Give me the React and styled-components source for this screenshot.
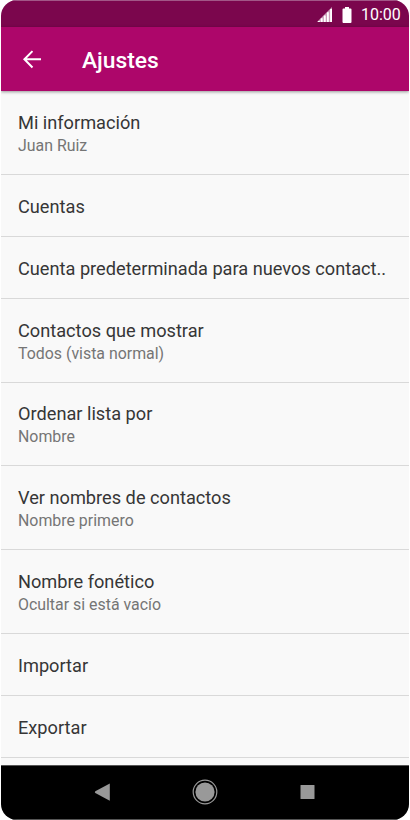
import React from "react";
import styled, { createGlobalStyle } from "styled-components";

const GlobalStyle = createGlobalStyle`
  * { box-sizing: border-box; }
  body {
    margin: 0;
    background: #ffffff;
    font-family: Roboto, "Liberation Sans", sans-serif;
  }
`;

const Phone = styled.main`
  display: flex;
  flex-direction: column;
  width: 408px;
  height: 820px;
  margin-left: 1px;
  overflow: hidden;
  border-radius: 16px;
  background: #f9f9f9;
`;

const StatusBar = styled.div`
  display: flex;
  flex: 0 0 27px;
  align-items: center;
  justify-content: flex-end;
  padding: 1px 8px 0 0;
  border-top: 1px solid #a25787;
  background: #7b064d;
  color: #ffffff;
`;

const SignalIcon = styled.svg`
  width: 15px;
  height: 15px;
  margin-right: 10px;
`;

const BatteryIcon = styled.svg`
  width: 10px;
  height: 16px;
  margin-right: 9px;
`;

const Clock = styled.span`
  width: 40px;
  font-size: 16px;
  line-height: 20px;
  white-space: nowrap;
`;

const AppBar = styled.header`
  display: flex;
  flex: 0 0 64px;
  align-items: center;
  padding: 0 21px;
  background: #ad066a;
  color: #ffffff;
  box-shadow: 0 1px 3px rgba(0, 0, 0, 0.4);
  z-index: 1;
`;

const BackButton = styled.button`
  display: flex;
  width: 60px;
  padding: 0;
  border: 0;
  background: none;
  color: inherit;
`;

const Title = styled.h1`
  margin: 0;
  padding-top: 4px;
  font-size: 22.8px;
  font-weight: 500;
  line-height: 28px;
`;

const SettingsList = styled.ul`
  flex: 1;
  min-height: 0;
  margin: 0;
  padding: 0;
  overflow: hidden;
  list-style: none;
`;

const SettingRow = styled.li`
  display: flex;
  flex-direction: column;
  justify-content: center;
  height: ${({ $tall }) => ($tall ? "83.8px" : "62px")};
  padding: ${({ $tall }) => ($tall ? "3px" : "4px")} 17px 0;
  border-bottom: 1px solid #d9d9d9;
`;

const SettingName = styled.span`
  color: #363636;
  font-size: 18.2px;
  line-height: 24px;
  white-space: nowrap;
`;

const SettingValue = styled.span`
  color: #757575;
  font-size: 15.9px;
  line-height: 22px;
  white-space: nowrap;
`;

const NavBar = styled.nav`
  display: flex;
  flex: 0 0 55px;
  align-items: center;
  justify-content: center;
  gap: 76px;
  padding-bottom: 1px;
  border-top: 1px solid #555555;
  border-bottom: 1px solid #555555;
  background: #000000;
`;

const NavIcon = styled.svg`
  width: 26px;
  height: 26px;
`;

const settings = [
  { name: "Mi información", value: "Juan Ruiz" },
  { name: "Cuentas" },
  { name: "Cuenta predeterminada para nuevos contact.." },
  { name: "Contactos que mostrar", value: "Todos (vista normal)" },
  { name: "Ordenar lista por", value: "Nombre" },
  { name: "Ver nombres de contactos", value: "Nombre primero" },
  { name: "Nombre fonético", value: "Ocultar si está vacío" },
  { name: "Importar" },
  { name: "Exportar" },
];

export default function App() {
  return (
    <>
      <GlobalStyle />
      <Phone>
        <StatusBar>
          <SignalIcon viewBox="0 0 16 16" aria-hidden="true">
            <path d="M0 16L16 0V16Z" fill="#fff" fillOpacity="0.6" />
            <path d="M1 15h2v1H1zM4 12h2v4H4zM7.3 9h2v7h-2zM10.6 5.5h2V16h-2zM14 2h2v14h-2z" fill="#fff" />
          </SignalIcon>
          <BatteryIcon viewBox="0 0 10 16" fill="#fff" aria-hidden="true">
            <path d="M3 0h4v1.5h1.5q1 0 1 1V15q0 1-1 1h-7q-1 0-1-1V2.5q0-1 1-1H3z" />
          </BatteryIcon>
          <Clock>10:00</Clock>
        </StatusBar>
        <AppBar>
          <BackButton aria-label="Atrás">
            <svg width="20" height="20" viewBox="0 0 20 20" fill="none" stroke="currentColor" strokeWidth="2">
              <path d="M19 10.3H2.5M10.5 2.1L2.4 10.3l8.1 8.2" />
            </svg>
          </BackButton>
          <Title>Ajustes</Title>
        </AppBar>
        <SettingsList>
          {settings.map(({ name, value }) => (
            <SettingRow key={name} $tall={Boolean(value)}>
              <SettingName>{name}</SettingName>
              {value && <SettingValue>{value}</SettingValue>}
            </SettingRow>
          ))}
        </SettingsList>
        <NavBar>
          <NavIcon viewBox="0 0 26 26" fill="#999999">
            <path d="M19.8 4.4v17.4L5.3 14q-1-.9 0-1.8z" />
          </NavIcon>
          <NavIcon viewBox="0 0 26 26">
            <circle cx="13" cy="13" r="11.8" fill="none" stroke="#999999" strokeWidth="1.2" />
            <circle cx="13" cy="13" r="9.6" fill="#999999" />
          </NavIcon>
          <NavIcon viewBox="0 0 26 26" fill="#999999">
            <rect x="6.5" y="6" width="14" height="14" rx="0.5" />
          </NavIcon>
        </NavBar>
      </Phone>
    </>
  );
}
